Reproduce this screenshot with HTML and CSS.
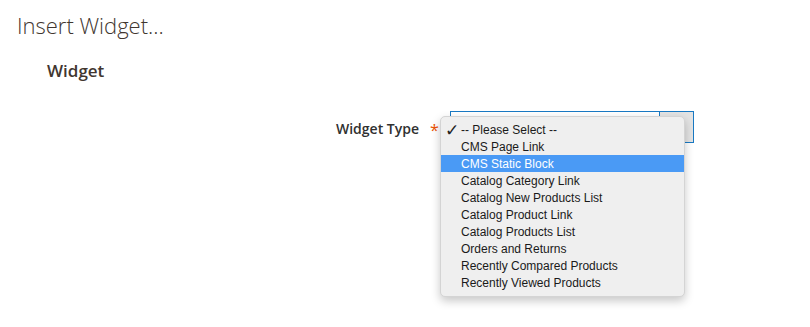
FILE: index.html
```html
<!DOCTYPE html>
<html lang="en">
<head>
    <meta charset="UTF-8">
    <meta name="viewport" content="width=device-width, initial-scale=1.0">
    <title>Insert Widget</title>
    <link rel="stylesheet" href="styles.css">
</head>
<body>
    <div class="modal">
        <h1 class="modal-title">Insert Widget...</h1>
        <div class="fieldset">
            <div class="legend">Widget</div>
            <div class="field">
                <label class="field-label" for="widgetType">Widget Type</label>
                <span class="required">*</span>
                <div class="control">
                    <div class="select-box" id="widgetType">
                        <span class="select-arrow"></span>
                    </div>
                    <ul class="dropdown">
                        <li class="option checked"><span class="check">✓</span>-- Please Select --</li>
                        <li class="option">CMS Page Link</li>
                        <li class="option active">CMS Static Block</li>
                        <li class="option">Catalog Category Link</li>
                        <li class="option">Catalog New Products List</li>
                        <li class="option">Catalog Product Link</li>
                        <li class="option">Catalog Products List</li>
                        <li class="option">Orders and Returns</li>
                        <li class="option">Recently Compared Products</li>
                        <li class="option">Recently Viewed Products</li>
                    </ul>
                </div>
            </div>
        </div>
    </div>
</body>
</html>
```

FILE: styles.css
```css
html, body {
    height: 100%;
}
body {
    margin: 0;
    background: #fff;
    font-family: "Open Sans", "Liberation Sans", sans-serif;
    color: #41362f;
}
.modal {
    min-height: 327px;
    box-sizing: border-box;
    padding: 9px 0 0 17px;
}
.modal-title {
    margin: 0;
    font-size: 22px;
    font-weight: 300;
    line-height: 32px;
    color: #41362f;
}
.fieldset {
    margin: 0;
}
.legend {
    margin: 16px 0 0 30px;
    font-size: 17px;
    font-weight: 600;
    line-height: 28px;
    color: #41362f;
}
.field {
    display: flex;
    align-items: flex-start;
    margin-top: 26px;
}
.field-label {
    width: 402px;
    padding-top: 2px;
    text-align: right;
    font-size: 14px;
    font-weight: 600;
    line-height: 32px;
    color: #303030;
}
.required {
    width: 31px;
    padding-top: 2px;
    text-align: center;
    font-size: 16px;
    line-height: 34px;
    color: #eb5202;
}
.control {
    position: relative;
}
.select-box {
    width: 244px;
    height: 32px;
    box-sizing: border-box;
    border: 1px solid #1979c3;
    background: #fff;
    display: flex;
    justify-content: flex-end;
}
.select-arrow {
    width: 33px;
    background: #e3e3e3;
    border-left: 1px solid #1979c3;
}
.dropdown {
    position: absolute;
    left: -10px;
    top: 5px;
    width: 245px;
    margin: 0;
    padding: 4px 0 5px;
    list-style: none;
    box-sizing: border-box;
    background: #efefef;
    border: 1px solid #d4d4d4;
    border-radius: 5px;
    box-shadow: 0 4px 10px rgba(0, 0, 0, 0.22);
    font-family: "Liberation Sans", Arial, sans-serif;
    font-size: 12px;
}
.option {
    height: 17px;
    box-sizing: border-box;
    padding: 1px 0 0 20px;
    line-height: 16px;
    color: #1a1a1a;
    position: relative;
}
.option.active {
    background: #4a9af5;
    color: #fff;
}
.check {
    position: absolute;
    left: 4px;
    top: 0;
    font-family: "DejaVu Sans", sans-serif;
    font-size: 17px;
    font-weight: bold;
    line-height: 18px;
    color: #222;
}
```
